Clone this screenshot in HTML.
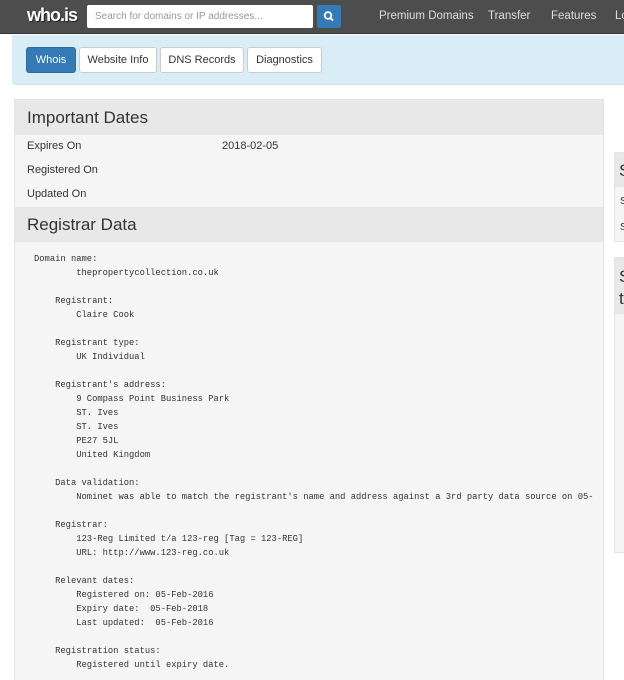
<!DOCTYPE html>
<html><head><meta charset="utf-8"><style>
*{box-sizing:border-box;margin:0;padding:0}
html,body{width:624px;height:680px;overflow:hidden}
body{background:#fff;font-family:"Liberation Sans",sans-serif;color:#333;position:relative}
.nav{position:absolute;left:0;top:0;width:624px;height:34px;background:#4d4d4d;border-bottom:1px solid #333}
.logo{position:absolute;left:27px;top:5px;font:bold 18px "Liberation Sans",sans-serif;color:#fff;letter-spacing:-1px;text-shadow:1px 1px 0 #222}
.search{position:absolute;left:87px;top:5px;width:226px;height:23px;background:#fff;border-radius:2px;font-size:10px;color:#999;padding:6px 8px}
.sbtn{position:absolute;left:317px;top:5px;width:24px;height:23px;background:#337ab7;border-radius:2px}
.nl{position:absolute;top:10px;font-size:11.5px;color:#ddd}
.band{position:absolute;left:12px;top:35px;width:620px;height:50px;background:#d9edf7;border-bottom:1px solid #c5e0ee;border-radius:0 0 0 4px}
.btn{position:absolute;top:47px;height:26px;border:1px solid #ccc;background:#fff;border-radius:3px;font-size:11px;padding:6px 0;text-align:center}
.panel{position:absolute;background:#f5f5f5;border:1px solid #e3e3e3}
.ph{position:absolute;left:0;right:0;background:#e8e8e8;font-size:17px;padding:8px 12px}
.row{position:absolute;left:12px;font-size:11px}
pre{position:absolute;left:34px;top:252px;font:8.8px/14px "Liberation Mono",monospace;color:#333}
</style></head><body>
<div class="nav">
<div class="logo">who.is</div>
<div class="search">Search for domains or IP addresses...</div>
<div class="sbtn"><svg width="24" height="23" viewBox="0 0 24 23"><circle cx="11" cy="10.5" r="3.3" fill="none" stroke="#fff" stroke-width="1.8"/><path d="M13.4 13 L16 15.6" stroke="#fff" stroke-width="2"/></svg></div>
<div class="nl" style="left:379px">Premium Domains</div>
<div class="nl" style="left:488px">Transfer</div>
<div class="nl" style="left:551px">Features</div>
<div class="nl" style="left:615px">Lo</div>
</div>
<div class="band"></div>
<div class="btn" style="left:26px;width:50px;background:#337ab7;border-color:#2e6da4;color:#fff">Whois</div>
<div class="btn" style="left:79px;width:78px">Website Info</div>
<div class="btn" style="left:160px;width:84px">DNS Records</div>
<div class="btn" style="left:247px;width:75px">Diagnostics</div>

<div class="panel" style="left:14px;top:99px;width:590px;height:581px;border-bottom:none">
<div class="ph" style="top:0;height:35px">Important Dates</div>
<div class="row" style="top:40px">Expires On</div>
<div class="row" style="top:40px;left:207px">2018-02-05</div>
<div class="row" style="top:64px">Registered On</div>
<div class="row" style="top:88px">Updated On</div>
<div class="ph" style="top:107px;height:35px">Registrar Data</div>
</div>
<pre>Domain name:
        thepropertycollection.co.uk

    Registrant:
        Claire Cook

    Registrant type:
        UK Individual

    Registrant's address:
        9 Compass Point Business Park
        ST. Ives
        ST. Ives
        PE27 5JL
        United Kingdom

    Data validation:
        Nominet was able to match the registrant's name and address against a 3rd party data source on 05-

    Registrar:
        123-Reg Limited t/a 123-reg [Tag = 123-REG]
        URL: http://www.123-reg.co.uk

    Relevant dates:
        Registered on: 05-Feb-2016
        Expiry date:  05-Feb-2018
        Last updated:  05-Feb-2016

    Registration status:
        Registered until expiry date.</pre>
<div class="panel" style="left:614px;top:152px;width:10px;height:90px;border-right:none"><div class="ph" style="top:0;height:34px;padding:8px 4px">S</div><div class="row" style="left:5px;top:43px;font-size:10px">S</div><div class="row" style="left:5px;top:69px;font-size:10px">S</div></div>
<div class="panel" style="left:614px;top:257px;width:10px;height:296px;border-right:none"><div class="ph" style="top:0;height:56px;padding:8px 4px;line-height:22px">S<br>t</div></div>
</body></html>
